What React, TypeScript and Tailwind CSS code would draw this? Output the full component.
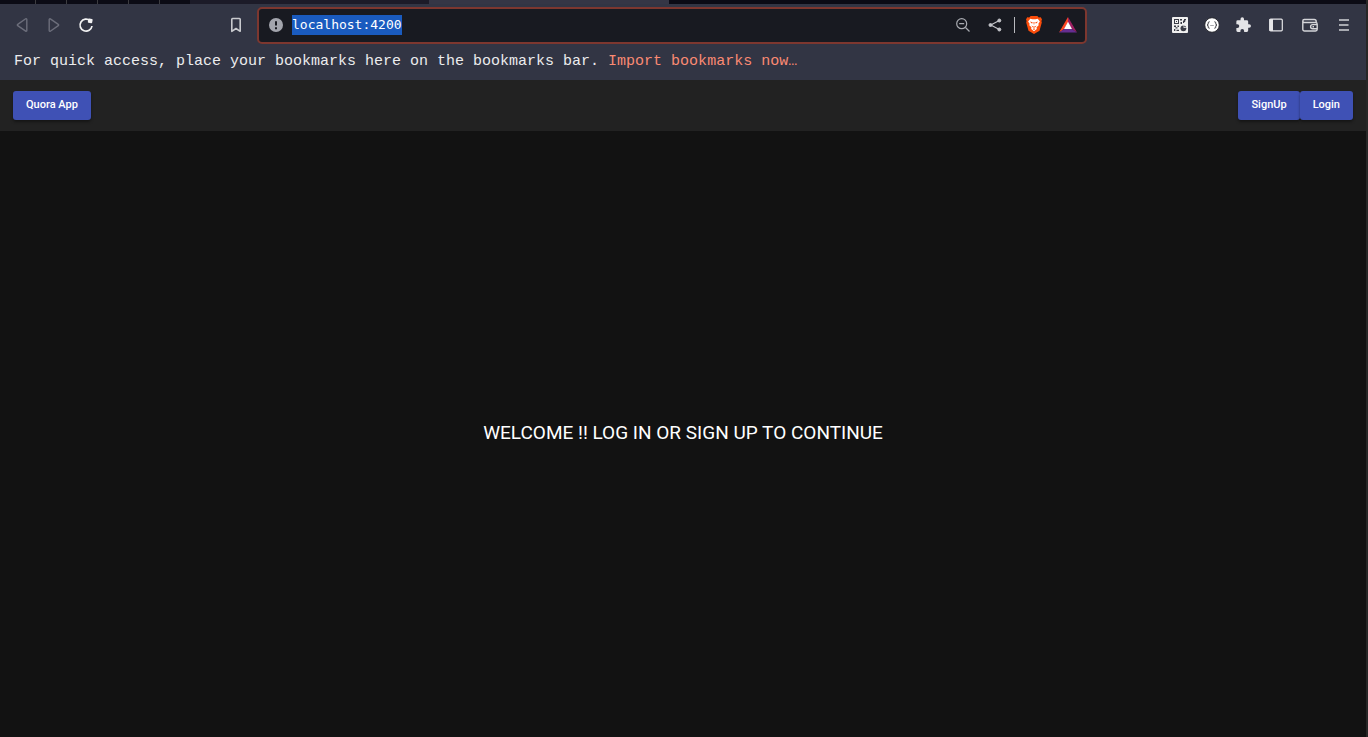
import { useEffect, useRef, type ReactNode } from "react";

const pinnedTabs = ["Mail", "Calendar", "Chat", "Docs", "Music"];

function IconButton({ label, children }: { label: string; children: ReactNode }) {
  return (
    <button type="button" aria-label={label} className="flex h-8 w-8 shrink-0 items-center justify-center text-[#e4e4e7]">
      {children}
    </button>
  );
}

function TabStrip() {
  return (
    <div className="flex h-1 bg-[#0b0b15]">
      <div className="flex w-[190px]">
        {pinnedTabs.map((tab) => (
          <div key={tab} className="w-[31px] shrink-0 border-r border-[#3c3c40] first:w-9" />
        ))}
      </div>
      <div className="w-[239px] bg-[#1c1b28]" />
      <div className="w-60 bg-[#353645]" />
    </div>
  );
}

function ArrowIcon({ flip = false }: { flip?: boolean }) {
  return (
    <svg width="16" height="16" viewBox="0 0 16 16" fill="none" stroke="#6c6e7b" strokeWidth="1.4" strokeLinejoin="round" className={flip ? "rotate-180" : ""}>
      <path d="M12.8 2.4v11.2a.7.7 0 0 1-1.1.5L3.7 8.600a.7.7 0 0 1 0-1.200l8-5.600a.7.7 0 0 1 1.100.6Z" />
    </svg>
  );
}

function AddressBar() {
  const input = useRef<HTMLInputElement>(null);

  useEffect(() => {
    input.current?.focus();
    input.current?.select();
  }, []);

  return (
    <div className="flex h-[37px] w-[830px] min-w-0 shrink items-center rounded-[5px] border-2 border-[#7d372f] bg-[#181a21] pb-px pl-[9px]">
      <svg width="16" height="16" viewBox="0 0 16 16" className="shrink-0">
        <circle cx="8" cy="8" r="7" fill="#a3a5ad" />
        <path d="M8 4.200v4.300" stroke="#181a21" strokeWidth="2" />
        <path d="M8 10.300v2" stroke="#181a21" strokeWidth="2" />
      </svg>
      <input
        ref={input}
        aria-label="Address"
        defaultValue="localhost:4200"
        spellCheck={false}
        className="ml-2 h-5 min-w-0 flex-1 bg-transparent font-['DejaVu_Sans_Mono',monospace] text-[13px] leading-5 text-white outline-none selection:bg-[#1a5bbf] selection:text-white"
      />
      <IconButton label="Zoom">
        <svg width="16" height="16" viewBox="0 0 16 16" fill="none" stroke="#a9abb1" strokeWidth="1.200">
          <circle cx="6.700" cy="6.700" r="5" />
          <path d="M4.200 6.700h5M10.500 10.500l4 4" />
        </svg>
      </IconButton>
      <IconButton label="Share">
        <svg width="16" height="16" viewBox="0 0 16 16" fill="#c3c4c9" stroke="#c3c4c9">
          <path d="M12.300 3.500 3.800 8l8.500 4.500" fill="none" strokeWidth="1.200" />
          <circle cx="12.300" cy="3.500" r="1.500" />
          <circle cx="3.500" cy="8" r="1.500" />
          <circle cx="12.300" cy="12.500" r="1.500" />
        </svg>
      </IconButton>
      <div className="ml-[3px] h-4 w-px bg-[#b9babf]" />
      <div className="ml-[3px] flex">
        <IconButton label="Shields">
          <svg width="18" height="20" viewBox="0 0 18 20">
            <path d="M5.700 1h6.600l1.500 1.400 2-.1 1.200 2.200-.6 1.500.4 1.500-2.300 8.200L9 19l-5.500-3.300L1.200 7.500 1.600 6 1 4.500l1.200-2.200 2 .1Z" fill="#fb4d0b" />
            <path d="M5.300 3.800 7.400 4.200h3.200l2.100-.4 2.200 2.700-1.500 2.200.3 1.500-2.100 2 .2 1.800L9 16.200 6.200 14l.2-1.800-2.100-2 .3-1.500-1.500-2.200Z" fill="#fff" />
            <path d="M4.800 6.500l2.900.7-.6 1.600ZM13.200 6.500l-2.900.7.6 1.600ZM8.500 7h1L9.300 9.500h-.6ZM6.300 10.400l2.700 1.400 2.700-1.400-1.700 2.200H8ZM7.800 14l1.200-.7 1.200.7-1.200.9Z" fill="#fb4d0b" />
          </svg>
        </IconButton>
      </div>
      <div className="mr-[1px] ml-[2px] flex">
        <IconButton label="Rewards">
          <svg width="18" height="16" viewBox="0 0 18 16">
            <path d="M9 0v5.200L5.200 12 0 15.500Z" fill="#ff4724" />
            <path d="M9 0v5.200l3.800 6.800L18 15.500Z" fill="#9e1f63" />
            <path d="M0 15.500 5.200 12h7.600L18 15.500Z" fill="#662d91" />
            <path d="M9 4.800 13 12H5Z" fill="#fff" />
          </svg>
        </IconButton>
      </div>
    </div>
  );
}

function Extensions() {
  return (
    <div className="mt-[2px] flex items-center">
      <IconButton label="QR code">
        <svg width="16" height="16" viewBox="0 0 16 16" fill="#3a3c46">
          <rect width="16" height="16" rx="1" fill="#f0f0f0" />
          <path d="M2 2h5v5H2ZM3 3v3h3V3Z" fillRule="evenodd" />
          <path d="M4 4h1v1H4ZM8 2h2v1.500H8ZM8.500 5h1.500v2H8.500ZM11 3.500h1.200V6H11ZM12 2h2v1.200h-.8V5H12Z" />
          <path d="M2 8.500h2v1.500H2ZM5.500 8.500H7V10H5.500ZM3.500 10.300h2v1.200h-2ZM2 12h1.300v2H2ZM4.500 12.800H7V14H4.500Z" />
          <circle cx="11.400" cy="11.300" r="2.900" />
          <path d="M11.600 7.800h.7v2.500h2.500v.7h-3.200Z" fill="#f0f0f0" />
        </svg>
      </IconButton>
      <IconButton label="JSON viewer">
        <svg width="16" height="16" viewBox="0 0 16 16" fill="none" stroke="#25262d">
          <circle cx="8" cy="8" r="7.300" fill="#fff" />
          <path d="M5.600 4.800c-1.300 0-1.400.6-1.400 1.600S4 8 3 8c1 0 1.200.6 1.200 1.600s.1 1.600 1.400 1.600M10.400 4.800c1.300 0 1.400.6 1.400 1.600S12 8 13 8c-1 0-1.200.6-1.200 1.600s-.1 1.600-1.400 1.600" />
          <path d="M6.200 8.500h3.600" stroke="#a5a6aa" />
        </svg>
      </IconButton>
      <IconButton label="Extensions">
        <svg width="16" height="16" viewBox="1.500 0.500 23 23" fill="currentColor">
          <path d="M20.500 11H19V7a2 2 0 0 0-2-2h-4V3.500a2.500 2.500 0 0 0-5 0V5H4a2 2 0 0 0-2 2v3.800h1.500a2.700 2.700 0 0 1 0 5.400H2V20a2 2 0 0 0 2 2h3.800v-1.500a2.700 2.700 0 0 1 5.400 0V22H17a2 2 0 0 0 2-2v-4h1.500a2.500 2.500 0 0 0 0-5Z" />
        </svg>
      </IconButton>
      <IconButton label="Sidebar">
        <svg width="16" height="16" viewBox="0 0 16 16">
          <rect x="1.700" y="2.200" width="12.600" height="11.600" rx="1" fill="none" stroke="currentColor" strokeWidth="1.200" />
          <path d="M1.500 2h3.500v12H1.500Z" fill="currentColor" />
        </svg>
      </IconButton>
      <div className="ml-[2px] flex">
        <IconButton label="Wallet">
          <svg width="18" height="16" viewBox="0 0 18 16" fill="none" stroke="#d4d5d9" strokeWidth="1.400">
            <path d="M15.200 5.200V4.500a2 2 0 0 0-2-2H3.300a1.500 1.500 0 0 0 0 3h11.200a1.700 1.700 0 0 1 1.700 1.700v5.100a1.700 1.700 0 0 1-1.700 1.700H3.500a1.700 1.700 0 0 1-1.700-1.700V4" />
            <path d="M16 7.600h-4.300a2.100 2.100 0 0 0 0 4.200H16M11.500 9.700h1.500" />
          </svg>
        </IconButton>
      </div>
      <div className="ml-[2px] flex">
        <IconButton label="Menu">
          <svg width="16" height="16" viewBox="0 0 16 16" stroke="#d0d1d5" strokeWidth="1.600">
            <path d="M3 3h10M3 8h9.500M3 13h10" />
          </svg>
        </IconButton>
      </div>
    </div>
  );
}

function Toolbar() {
  return (
    <div className="flex h-[43px] items-start justify-between px-[6px] pt-[3px]">
      <div className="flex min-w-0 items-start">
        <div className="mt-[2px] mr-[118px] flex">
          <IconButton label="Back"><ArrowIcon /></IconButton>
          <IconButton label="Forward"><ArrowIcon flip /></IconButton>
          <IconButton label="Reload">
            <svg width="16" height="16" viewBox="0 0 16 16" fill="none" stroke="#f2f2f3" strokeWidth="1.700">
              <path d="M12.200 3.800A6 6 0 1 0 14 9" />
              <path d="M10 2.500a.9.9 0 0 1 .9-.9h2.600a.9.9 0 0 1 .9.9v2.600a.9.9 0 0 1-.9.9h-2.600a.9.9 0 0 1-.9-.9Z" transform="rotate(10 12 4)" fill="#f2f2f3" stroke="none" />
            </svg>
          </IconButton>
        </div>
        <div className="mt-[2px] flex">
          <IconButton label="Bookmark this page">
            <svg width="16" height="16" viewBox="0 0 16 16" fill="none" stroke="#c9cace" strokeWidth="1.600" strokeLinejoin="round">
              <path d="M3.800 2.300a.8.8 0 0 1 .8-.8h6.800a.8.8 0 0 1 .8.8v12L8 11.500l-4.200 2.800Z" />
            </svg>
          </IconButton>
        </div>
        <div className="ml-[5px] flex min-w-0">
          <AddressBar />
        </div>
      </div>
      <Extensions />
    </div>
  );
}

function NavButton({ children }: { children: string }) {
  return (
    <button type="button" className="h-[29px] rounded-[3px] bg-[#3f51b5] px-[13px] pb-[2px] text-[11px] leading-[27px] font-medium text-white shadow-[0_2px_3px_rgba(0,0,0,0.4)]">
      {children}
    </button>
  );
}

export default function App() {
  return (
    <div className="flex min-h-screen flex-col border-r-2 border-[#272727] bg-[#121212] font-['Roboto',sans-serif] text-white">
      <header className="bg-[#323544]">
        <TabStrip />
        <Toolbar />
        <div className="flex h-[33px] items-center gap-[9px] pb-[3px] pl-[14px] font-['Liberation_Mono',monospace] text-[15px] whitespace-nowrap">
          <span className="text-[#ececee]">For quick access, place your bookmarks here on the bookmarks bar.</span>
          <a href="#import" className="text-[#fb8a73]">Import bookmarks now…</a>
        </div>
      </header>
      <nav className="flex h-[51px] items-center justify-between bg-[#222222] px-[13px]">
        <NavButton>Quora App</NavButton>
        <div className="flex">
          <NavButton>SignUp</NavButton>
          <NavButton>Login</NavButton>
        </div>
      </nav>
      <main className="flex flex-1 items-center justify-center pb-[2px]">
        <h1 className="text-[19px] leading-7">WELCOME !! LOG IN OR SIGN UP TO CONTINUE</h1>
      </main>
    </div>
  );
}
